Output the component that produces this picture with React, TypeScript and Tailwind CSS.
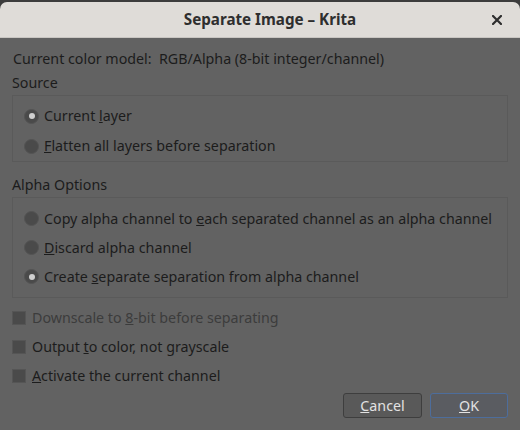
import React from "react";

const font = { fontFamily: '"Noto Sans", "Open Sans", sans-serif' };

function Radio({ checked, h, children }: { checked?: boolean; h: string; children: React.ReactNode }) {
  return (
    <div className={"flex items-center gap-[5px] " + h}>
      <div className="flex h-[15px] w-[15px] items-center justify-center rounded-full border border-[#545454] bg-[#4a4a4a]">
        {checked && <div className="h-[6px] w-[6px] rounded-full bg-[#d0d0d0]" />}
      </div>
      <span>{children}</span>
    </div>
  );
}

function Check({ disabled, children }: { disabled?: boolean; children: React.ReactNode }) {
  return (
    <div className="flex h-[29px] items-center gap-[6px]">
      <div className="h-[14px] w-[14px] border border-[#555555] bg-[#4a4a4a]" />
      <span className={disabled ? "text-[#3c3c3c]" : ""}>{children}</span>
    </div>
  );
}

export default function App() {
  return (
    <div className="h-[430px] w-[520px] bg-[#3c3c3c] pt-[2px] text-[14.25px] text-[#1c1c1c]" style={font}>
      <div className="flex h-[428px] flex-col overflow-hidden rounded-t-[7px]">
        <div className="relative flex h-[36px] shrink-0 items-center justify-center border-b border-[#c9c6c2] bg-[#dfdcd8] pl-[20px]">
          <span className="text-[15.2px] font-bold text-[#2e2e2e]">Separate Image – Krita</span>
          <svg className="absolute right-[18px] top-[13px]" width="10" height="10" viewBox="0 0 10 10">
            <path d="M1 1L9 9M9 1L1 9" stroke="#2e2e2e" strokeWidth="2.2" strokeLinecap="square" />
          </svg>
        </div>
        <div className="flex flex-1 flex-col bg-[#626262] px-[12px]">
          <div className="mt-[10px] flex h-[22px] items-center pl-[1px]">Current color model:&nbsp; RGB/Alpha (8-bit integer/channel)</div>
          <div className="mt-[2px] flex h-[22px] items-center">Source</div>
          <div className="mt-[1px] border border-[#5a5a5a] pl-[11px] pt-[5px]">
            <Radio checked h="h-[30px]">
              Current <u>l</u>ayer
            </Radio>
            <Radio h="h-[30px]">
              <u>F</u>latten all layers before separation
            </Radio>
          </div>
          <div className="mt-[12px] flex h-[22px] items-center">Alpha Options</div>
          <div className="mt-[1px] border border-[#5a5a5a] pb-[6px] pl-[11px] pt-[6px]">
            <Radio h="h-[29px]">
              Copy alpha channel to <u>e</u>ach separated channel as an alpha channel
            </Radio>
            <Radio h="h-[29px]">
              <u>D</u>iscard alpha channel
            </Radio>
            <Radio checked h="h-[29px]">
              Create <u>s</u>eparate separation from alpha channel
            </Radio>
          </div>
          <div className="mt-[5px]">
            <Check disabled>
              Downscale to <u>8</u>-bit before separating
            </Check>
            <Check>
              Output <u>t</u>o color, not grayscale
            </Check>
            <Check>
              <u>A</u>ctivate the current channel
            </Check>
          </div>
          <div className="mt-[3px] flex justify-end gap-[8px]">
            <button className="h-[25px] w-[79px] rounded-[3px] border border-[#3e3e3e] bg-[#595959] text-[#e2e2e2]">
              <u>C</u>ancel
            </button>
            <button className="h-[25px] w-[78px] rounded-[3px] border border-[#4d6d9c] bg-[#5a5c61] text-[#e2e2e2]">
              <u>O</u>K
            </button>
          </div>
        </div>
      </div>
    </div>
  );
}
